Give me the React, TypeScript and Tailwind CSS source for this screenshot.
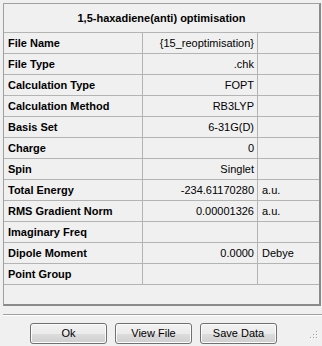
import * as React from 'react';

interface Row {
  label: string;
  value: string;
  unit?: string;
}

const rows: Row[] = [
  { label: 'File Name', value: '{15_reoptimisation}' },
  { label: 'File Type', value: '.chk' },
  { label: 'Calculation Type', value: 'FOPT' },
  { label: 'Calculation Method', value: 'RB3LYP' },
  { label: 'Basis Set', value: '6-31G(D)' },
  { label: 'Charge', value: '0' },
  { label: 'Spin', value: 'Singlet' },
  { label: 'Total Energy', value: '-234.61170280', unit: 'a.u.' },
  { label: 'RMS Gradient Norm', value: '0.00001326', unit: 'a.u.' },
  { label: 'Imaginary Freq', value: '' },
  { label: 'Dipole Moment', value: '0.0000', unit: 'Debye' },
  { label: 'Point Group', value: '' },
];

const DialogButton: React.FC<{ label: string }> = ({ label }) => (
  <button
    type="button"
    className="w-[77px] h-[21px] rounded-[3px] border border-[#707070] bg-[linear-gradient(to_bottom,#f2f2f2_0%,#ebebeb_50%,#dddddd_51%,#cfcfcf_100%)] shadow-[inset_0_0_0_1px_#fcfcfc] text-[11px] leading-[19px] text-black"
  >
    {label}
  </button>
);

// little dotted resize grip in the corner
const Grip: React.FC = () => {
  const dots = [
    [6, 0],
    [3, 3],
    [6, 3],
    [0, 6],
    [3, 6],
    [6, 6],
  ];
  return (
    <svg width="9" height="9" viewBox="0 0 9 9" className="absolute right-[3px] bottom-[6px]">
      {dots.map(([x, y], i) => (
        <g key={i}>
          <rect x={x + 1} y={y + 1} width="1" height="1" fill="#ffffff" />
          <rect x={x} y={y} width="1" height="1" fill="#a0a0a0" />
        </g>
      ))}
    </svg>
  );
};

export default function App() {
  return (
    <div
      className="relative w-[322px] h-[346px] bg-[#f0f0f0] flex flex-col text-black"
      style={{ fontFamily: '"Liberation Sans", Arial, sans-serif' }}
    >
      {/* Results grid */}
      <div className="ml-[3px] mt-[3px] w-[318px] h-[303px] border-t border-l border-[#a0a0a0] border-r-2 border-b-2 border-r-[#8a8a8a] border-b-[#8a8a8a] flex flex-col">
        <div className="h-[29px] border-b border-[#b4b4b4] flex items-center justify-center text-[11px] font-bold">
          1,5-haxadiene(anti) optimisation
        </div>
        {rows.map((r) => (
          <div key={r.label} className="h-[21px] border-b border-[#b4b4b4] flex text-[11px] leading-[20px]">
            <div className="w-[139px] border-r border-[#b4b4b4] pl-[4px] font-bold whitespace-nowrap">
              {r.label}
            </div>
            <div className="w-[115px] border-r border-[#b4b4b4] pr-[3px] text-right whitespace-nowrap">
              {r.value}
            </div>
            <div className="flex-1 pl-[4px] whitespace-nowrap">{r.unit}</div>
          </div>
        ))}
      </div>

      {/* etched separator */}
      <div className="ml-[3px] mt-[8px] h-[2px] border-t border-[#a0a0a0] border-b border-b-white" />

      <div className="mt-[7px] pl-[30px] flex gap-[8px]">
        <DialogButton label="Ok" />
        <DialogButton label="View File" />
        <DialogButton label="Save Data" />
      </div>

      <Grip />
    </div>
  );
}
